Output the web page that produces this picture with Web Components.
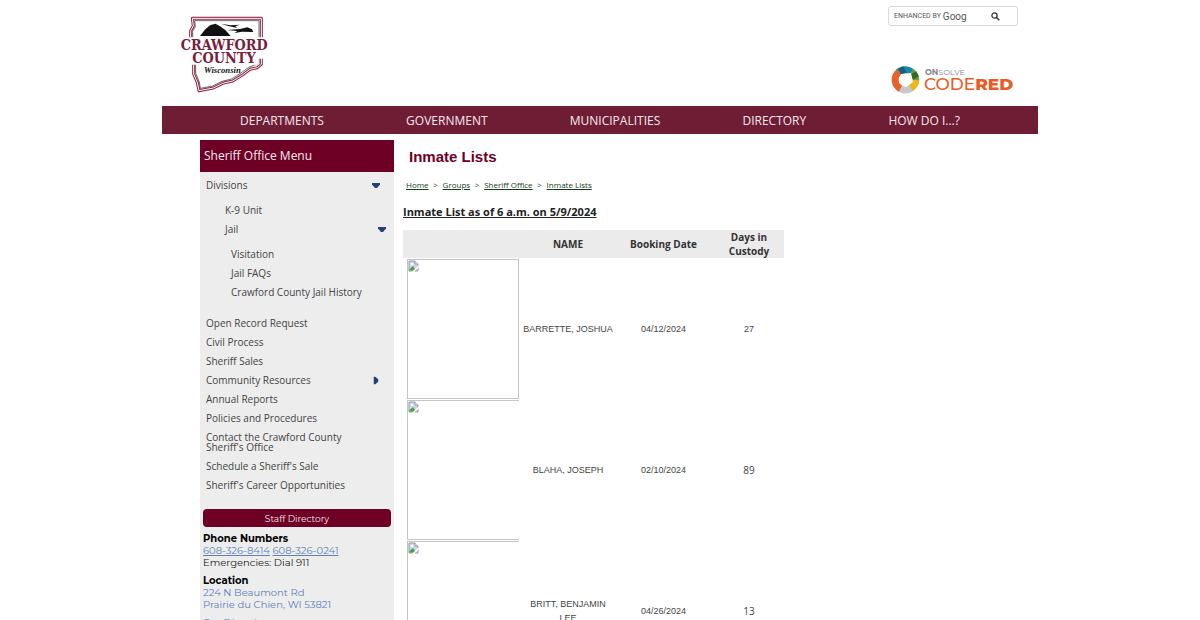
<!DOCTYPE html>
<html lang="en">
<head>
<meta charset="utf-8">
<title>Inmate Lists</title>
<style>
    body {
        margin: 0;
        background: #fff;
        color: #444;
        font-family: "Open Sans", sans-serif;
        font-size: 10px;
        --maroon: #6d0024;
        --nav: #6f1d35;
        --panel: #ededed;
    }
</style>
</head>
<body>
<county-page>
    <site-header slot="header"></site-header>
    <site-nav slot="nav">
        <a href="#">DEPARTMENTS</a>
        <a href="#">GOVERNMENT</a>
        <a href="#">MUNICIPALITIES</a>
        <a href="#">DIRECTORY</a>
        <a href="#">HOW DO I...?</a>
    </site-nav>
    <side-menu slot="side" heading="Sheriff Office Menu">
        <menu-item arrow="down">Divisions
            <menu-item slot="children">K-9 Unit</menu-item>
            <menu-item slot="children" arrow="down">Jail
                <menu-item slot="children">Visitation</menu-item>
                <menu-item slot="children">Jail FAQs</menu-item>
                <menu-item slot="children">Crawford County Jail History</menu-item>
            </menu-item>
        </menu-item>
        <menu-item>Open Record Request</menu-item>
        <menu-item>Civil Process</menu-item>
        <menu-item>Sheriff Sales</menu-item>
        <menu-item arrow="right">Community Resources</menu-item>
        <menu-item>Annual Reports</menu-item>
        <menu-item>Policies and Procedures</menu-item>
        <menu-item>Contact the Crawford County Sheriff's Office</menu-item>
        <menu-item>Schedule a Sheriff's Sale</menu-item>
        <menu-item>Sheriff's Career Opportunities</menu-item>
        <contact-card slot="contact"></contact-card>
    </side-menu>
    <page-title>Inmate Lists</page-title>
    <bread-crumbs>
        <a href="#">Home</a>
        <a href="#">Groups</a>
        <a href="#">Sheriff Office</a>
        <a href="#">Inmate Lists</a>
    </bread-crumbs>
    <inmate-table heading="Inmate List as of 6 a.m. on 5/9/2024"></inmate-table>
</county-page>

<script>
function attach(element, html) {
    const template = document.createElement("template");
    template.innerHTML = html;
    element.attachShadow({ mode: "open" });
    element.shadowRoot.appendChild(template.content.cloneNode(true));
}

class CountyPage extends HTMLElement {
    constructor() {
        super();
        attach(this, `
            <style>
                :host { display: block; }
                .wrap { max-width: 876px; margin: 0 auto; }
                .body {
                    display: grid;
                    grid-template-columns: 194px minmax(0, 1fr);
                    gap: 9px;
                    max-width: 800px;
                    margin: 6px auto 0;
                }
            </style>
            <div class="wrap">
                <slot name="header"></slot>
                <slot name="nav"></slot>
                <div class="body">
                    <aside><slot name="side"></slot></aside>
                    <main><slot></slot></main>
                </div>
            </div>
        `);
    }
}

class SiteHeader extends HTMLElement {
    constructor() {
        super();
        attach(this, `
            <style>
                :host {
                    display: flex;
                    justify-content: space-between;
                    align-items: flex-start;
                    padding: 6px 20px 11px 18px;
                }
                svg { display: block; }
                .seal { margin-top: 10px; }
                .right {
                    display: flex;
                    flex-direction: column;
                    align-items: flex-end;
                    gap: 39px;
                }
            </style>
            <a class="seal" href="#" aria-label="Crawford County home">
                <svg width="90" height="77" viewBox="60 48 270 231">
                    <g fill="none" stroke-linejoin="round">
                        <path d="M97 55H304V193L292 203L270 208L246 226L218 243L188 250L160 264L117 272L112 248L101 222V190L92 108V92L100 78Z" stroke="#8a2443" stroke-width="9"/>
                        <path d="M97 55H304V193L292 203L270 208L246 226L218 243L188 250L160 264L117 272L112 248L101 222V190L92 108V92L100 78Z" stroke="#fff" stroke-width="3"/>
                        <path d="M104 62H297V190L266 202L240 221L214 237L186 244L158 258L121 265L118 246L107 220V186L98 108V94L106 80Z" stroke="#222" stroke-width="2"/>
                    </g>
                    <path d="M120 108L136 88L150 76L166 71L180 79L196 90L212 108Z" fill="#111"/>
                    <path d="M182 71L212 76L240 74L226 79L232 84L208 79ZM200 90L240 87L262 82L276 88L280 96L246 95L224 99L232 93Z" fill="#111"/>
                    <path d="M85 112H320V176H296V194H85Z" fill="#fff"/>
                    <g fill="#781c3b" font-family="DejaVu Serif Condensed, DejaVu Serif, serif" font-weight="bold" font-size="43">
                        <text x="62" y="149">CRAWFORD</text>
                        <text x="97" y="190">COUNTY</text>
                    </g>
                    <text x="132" y="218" fill="#111" font-family="Liberation Serif, serif" font-weight="bold" font-style="italic" font-size="26">Wisconsin</text>
                </svg>
            </a>
            <div class="right">
                <site-search></site-search>
                <a href="#" aria-label="OnSolve CodeRED">
                    <svg width="127" height="30" viewBox="0 0 127 30">
                        <g fill="none" stroke-width="7">
                            <path d="M7.2 7.4A10 10 0 0 1 21.600 8.200" stroke="#1687ad"/>
                            <path d="M20.300 6.700A10 10 0 0 1 24.300 18" stroke="#6a9d3b"/>
                            <path d="M24.700 15A10 10 0 0 1 17 24.300" stroke="#efb71e"/>
                            <path d="M20 23.300A10 10 0 0 1 8 22.600" stroke="#c8c8ca"/>
                            <path d="M9.500 23.600A10 10 0 0 1 8.200 6.700" stroke="#e8632a"/>
                            <path d="M9 7L14 4.500" stroke="#17607b"/>
                            <path d="M22 8L25 13" stroke="#36682c"/>
                        </g>
                        <path d="M10 9L20 8L22 17L15 22L8 18Z" fill="#fff"/>
                        <g font-family="Montserrat, Lato, sans-serif">
                            <text x="34" y="10" font-size="8" fill="#85858c"><tspan font-weight="bold">ON</tspan>SOLVE</text>
                            <text x="33" y="25" font-size="17" font-weight="500" fill="#ea5b25">CODE<tspan font-weight="800">RED</tspan></text>
                        </g>
                    </svg>
                </a>
            </div>
        `);
    }
}

class SiteSearch extends HTMLElement {
    constructor() {
        super();
        attach(this, `
            <style>
                :host { display: block; }
                form {
                    display: flex;
                    align-items: center;
                    box-sizing: border-box;
                    width: 130px;
                    height: 20px;
                    padding-left: 5px;
                    border: 1px solid #d9d9d9;
                    border-radius: 3px;
                    color: #555;
                    font-family: Roboto, sans-serif;
                }
                label { display: flex; align-items: center; gap: 2px; font-size: 7px; white-space: nowrap; }
                b { font: 10px Roboto, sans-serif; }
                input { flex: 1; min-width: 0; padding: 0; border: 0; outline: 0; }
                button { width: 43px; padding: 0; border: 0; background: none; }
                svg { display: block; margin: 0 auto; }
            </style>
            <form>
                <label for="q">ENHANCED BY <b>Goog</b></label>
                <input id="q" type="text">
                <button type="button" aria-label="Search">
                    <svg width="9" height="9" viewBox="0 0 9 9" fill="none" stroke="#333">
                        <circle cx="3.500" cy="3.500" r="2.600" stroke-width="1.300"/>
                        <path d="M5.500 5.500L8.300 8.300" stroke-width="1.500"/>
                    </svg>
                </button>
            </form>
        `);
    }
}

class SiteNav extends HTMLElement {
    constructor() {
        super();
        attach(this, `
            <style>
                :host {
                    display: flex;
                    flex-wrap: wrap;
                    justify-content: space-between;
                    padding: 2px 78px 0;
                    background: var(--nav);
                    font-size: 12px;
                    line-height: 26px;
                }
                ::slotted(a) { color: #f8e9ee; text-decoration: none; }
            </style>
            <slot></slot>
        `);
    }
}

class SideMenu extends HTMLElement {
    constructor() {
        super();
        attach(this, `
            <style>
                :host { display: block; background: var(--panel); }
                h2 {
                    margin: 0;
                    padding-left: 4px;
                    background: var(--maroon);
                    color: #f8e9ee;
                    font-size: 12px;
                    font-weight: normal;
                    line-height: 32px;
                }
                nav { padding: 3px 6px 15px; }
            </style>
            <h2></h2>
            <nav><slot></slot></nav>
            <slot name="contact"></slot>
        `);
        this.shadowRoot.querySelector("h2").textContent = this.getAttribute("heading");
    }
}

class MenuItem extends HTMLElement {
    constructor() {
        super();
        attach(this, `
            <style>
                :host { display: block; line-height: 10px; }
                .row {
                    display: flex;
                    justify-content: space-between;
                    align-items: center;
                    padding: 5px 8px 4px 0;
                }
                a { max-width: 150px; color: #444; text-decoration: none; }
                svg { display: none; fill: #253f7d; }
                :host([arrow]) svg { display: block; }
                :host([arrow="right"]) svg { transform: rotate(-90deg); }
                .children { display: none; }
                :host([arrow="down"]) .children { display: block; padding: 6px 0 6px 19px; }
                :host([arrow="down"][slot]) .children { padding-left: 6px; }
                :host([arrow="down"][slot]) .row { padding-right: 2px; }
            </style>
            <div class="row">
                <a href="#"><slot></slot></a>
                <svg width="8" height="5" viewBox="0 0 8 5"><path d="M0 0H8V1.500L5 5H3L0 1.500Z"/></svg>
            </div>
            <div class="children"><slot name="children"></slot></div>
        `);
    }
}

class ContactCard extends HTMLElement {
    constructor() {
        super();
        attach(this, `
            <style>
                :host {
                    display: block;
                    padding: 0 3px 12px;
                    color: #222;
                    font-family: Montserrat, Inter, sans-serif;
                    font-size: 10px;
                    line-height: 12px;
                }
                button {
                    display: block;
                    width: 100%;
                    height: 18px;
                    margin-bottom: 6px;
                    padding: 0;
                    border: 0;
                    border-radius: 4px;
                    background: var(--maroon);
                    color: #f8e9ee;
                    font: 9px Montserrat, Inter, sans-serif;
                }
                p { margin: 0 0 6px; }
                b { color: #000; }
                a { color: #6080b8; }
                .plain { text-decoration: none; }
            </style>
            <button type="button">Staff Directory</button>
            <p>
                <b>Phone Numbers</b><br>
                <a href="#">608-326-8414</a> <a href="#">608-326-0241</a><br>
                Emergencies: Dial 911
            </p>
            <p>
                <b>Location</b><br>
                <a class="plain" href="#">224 N Beaumont Rd<br>Prairie du Chien, WI 53821</a>
            </p>
            <p><a class="plain" href="#">Get Directions</a></p>
        `);
    }
}

class PageTitle extends HTMLElement {
    constructor() {
        super();
        attach(this, `
            <style>
                :host { display: block; padding: 8px 6px 0; }
                h1 {
                    margin: 0;
                    color: var(--maroon);
                    font: bold 15px/18px "Liberation Sans", Arial, sans-serif;
                }
            </style>
            <h1><slot></slot></h1>
        `);
    }
}

class BreadCrumbs extends HTMLElement {
    constructor() {
        super();
        attach(this, `
            <style>
                nav { display: flex; padding: 13px 3px 0; font-size: 8px; line-height: 12px; }
                ::slotted(a) { color: #173d1c; }
                ::slotted(a:not(:last-child))::after {
                    content: ">";
                    display: inline-block;
                    width: 14px;
                    text-align: center;
                }
            </style>
            <nav aria-label="Breadcrumb"><slot></slot></nav>
        `);
    }
}

const inmates = [
    ["BARRETTE, JOSHUA", "04/12/2024", "27"],
    ["BLAHA, JOSEPH", "02/10/2024", "89"],
    ["BRITT, BENJAMIN LEE", "04/26/2024", "13"]
];

class InmateTable extends HTMLElement {
    constructor() {
        super();
        attach(this, `
            <style>
                :host { display: block; }
                h2 {
                    margin: 12px 0 10px;
                    color: #222;
                    font-size: 11px;
                    line-height: 17px;
                    text-decoration: underline;
                }
                table { width: 381px; table-layout: fixed; border-collapse: collapse; text-align: center; }
                th { padding: 0; background: #ebebeb; color: #333; line-height: 14px; }
                td { padding: 0; line-height: 14px; }
                td { font-family: "Liberation Sans", Arial, sans-serif; font-size: 9px; }
                tr:nth-child(n+2) td:last-child { font-family: "Open Sans", sans-serif; font-size: 10px; }
                .photo { width: 120px; }
                .name { width: 90px; }
                .date { width: 101px; }
                .frame {
                    box-sizing: border-box;
                    width: 112px;
                    height: 140px;
                    margin: 1px 4px 0;
                    border: 1px solid #c4c4c4;
                }
                tr:nth-child(n+2) .frame { border-right: 0; }
                svg { display: block; }
            </style>
            <h2></h2>
            <table>
                <thead>
                    <tr>
                        <th class="photo"></th>
                        <th class="name">NAME</th>
                        <th class="date">Booking Date</th>
                        <th>Days in<br>Custody</th>
                    </tr>
                </thead>
                <tbody></tbody>
            </table>
        `);
        this.shadowRoot.querySelector("h2").textContent = this.getAttribute("heading");
        this.shadowRoot.querySelector("tbody").innerHTML = inmates.map(([name, date, days]) => `
            <tr>
                <td>
                    <div class="frame">
                        <svg width="11" height="12" viewBox="0 0 11 12">
                            <path d="M1 1H7L10 4V11H1Z" fill="#c6d7f3" stroke="#999"/>
                            <path d="M7 1V4H10" fill="#fff" stroke="#999"/>
                            <circle cx="4" cy="4" r="1.300" fill="#fff"/>
                            <path d="M1.500 10.500V9L5 6L8 10.500Z" fill="#4ca535"/>
                            <path d="M4 12L11 5V7L6 12Z" fill="#fff"/>
                        </svg>
                    </div>
                </td>
                <td>${name}</td>
                <td>${date}</td>
                <td>${days}</td>
            </tr>
        `).join("");
    }
}

window.customElements.define("site-search", SiteSearch);
window.customElements.define("site-header", SiteHeader);
window.customElements.define("site-nav", SiteNav);
window.customElements.define("menu-item", MenuItem);
window.customElements.define("contact-card", ContactCard);
window.customElements.define("side-menu", SideMenu);
window.customElements.define("page-title", PageTitle);
window.customElements.define("bread-crumbs", BreadCrumbs);
window.customElements.define("inmate-table", InmateTable);
window.customElements.define("county-page", CountyPage);
</script>
</body>
</html>
